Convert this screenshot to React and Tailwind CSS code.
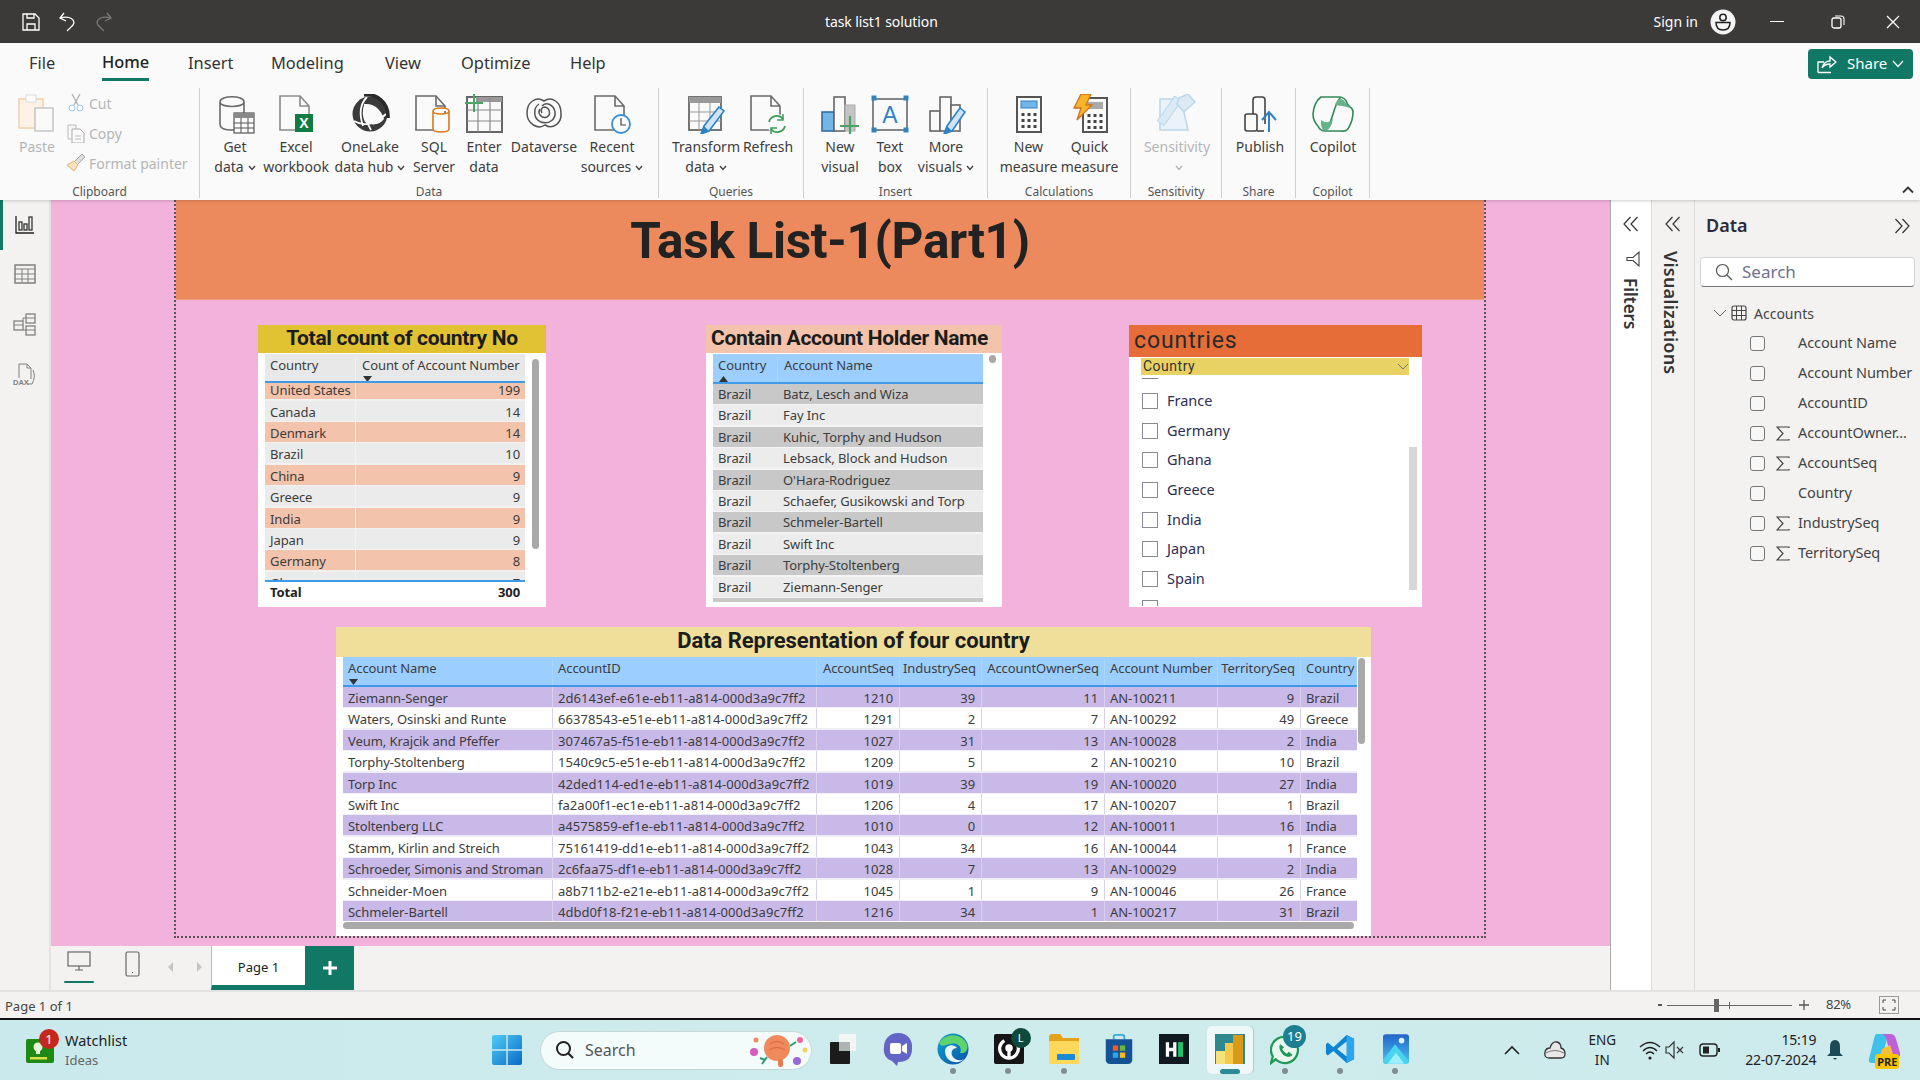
import React from "react";

const seg = "font-['Noto_Sans',sans-serif]";
const din = "font-['Roboto',sans-serif]";

function Svg({ w = 40, h = 40, vb, className = "", children }) {
  return (
    <svg width={w} height={h} viewBox={vb || `0 0 ${w} ${h}`} fill="none" className={`shrink-0 ${className}`}>
      {children}
    </svg>
  );
}

const G = "#6b6b6b";
const Page = ({ x = 5, c = G, sw = 1.6 }) => (
  <path d={`M${x} 2 H${x + 20} L${x + 29} 12 V36 H${x} Z M${x + 20} 2 V12 H${x + 29}`} stroke={c} strokeWidth={sw} />
);

const icons = {
  paste: (
    <Svg>
      <rect x="2" y="7" width="24" height="29" fill="#fdf2e4" stroke="#f0d4b0" strokeWidth="1.6" />
      <rect x="9" y="3" width="10" height="7" fill="#fff" stroke="#d9d9d9" />
      <rect x="18" y="16" width="18" height="23" fill="#fafafa" stroke="#c8c8c8" strokeWidth="1.6" />
    </Svg>
  ),
  getdata: (
    <Svg>
      <path d="M5 8 C5 1 29 1 29 8 V30 C29 36 14 37 9 35 C6 34 5 32 5 30 Z M5 8 C5 14 29 14 29 8" stroke={G} strokeWidth="1.6" fill="#fafafa" />
      <rect x="19" y="19" width="20" height="20" fill="#fafafa" stroke="#555" strokeWidth="1.2" />
      <rect x="19" y="19" width="20" height="5" fill="#888" />
      <path d="M19 29 H39 M19 34 H39 M26 24 V39 M33 24 V39" stroke="#555" />
    </Svg>
  ),
  excel: (
    <Svg>
      <Page x={4} c="#8a8a8a" />
      <rect x="19" y="20" width="18" height="18" fill="#107c41" />
      <text x="28" y="34" textAnchor="middle" fontSize="14" fontWeight="700" fill="#fff" fontFamily="Liberation Sans">X</text>
    </Svg>
  ),
  onelake: (
    <Svg>
      <circle cx="20" cy="20" r="17.5" fill="#3a3a3a" />
      <path d="M15 10 C23 9 31 15 34 25 C30 31 22 32 15 28 C12 22 12 15 15 10Z" fill="#fafafa" />
      <path d="M15 10 C13 18 15 26 21 36 M4 27 C14 33 26 30 36 20 M17 3 C10 10 9 20 13 32" stroke="#fff" strokeWidth="1.8" />
      <path d="M14 1 C26 -1 39 8 38 24" stroke="#2a2a2a" strokeWidth="3.5" />
    </Svg>
  ),
  sql: (
    <Svg>
      <Page x={2} />
      <path d="M19 17 C19 13 35 13 35 17 V35 C35 39 19 39 19 35 Z M19 17 C19 21 35 21 35 17" fill="#fafafa" stroke="#d97b1f" strokeWidth="1.6" />
    </Svg>
  ),
  enter: (
    <Svg>
      <rect x="3" y="3" width="35" height="35" fill="#fafafa" stroke="#666" strokeWidth="2" />
      <rect x="12" y="3" width="26" height="5" fill="#999" />
      <path d="M3 16 H38 M3 27 H38 M14 4 V38 M26 4 V38" stroke="#8a8a8a" strokeWidth="1.2" />
      <path d="M10 0 V18 M1 9 H19" stroke="#4aa564" strokeWidth="2" />
    </Svg>
  ),
  dataverse: (
    <Svg>
      <path d="M20 7 C12 2 3 8 3 19 C3 30 14 36 21 31 C29 36 38 29 37 19 C37 8 28 2 20 7Z" stroke="#555" strokeWidth="1.5" />
      <path d="M15 10 C9 14 9 25 17 28 C25 31 32 25 31 18 C30 11 22 7 18 12" stroke="#555" strokeWidth="1.5" />
      <path d="M16 15 C13 20 18 25 23 23 C27 21 26 14 21 13 C18 13 16 16 18 19" stroke="#555" strokeWidth="1.5" />
    </Svg>
  ),
  recent: (
    <Svg>
      <Page x={3} />
      <circle cx="29" cy="30" r="9" fill="#fafafa" stroke="#3a8fd0" strokeWidth="1.8" />
      <path d="M29 24 V31 H34" stroke="#444" strokeWidth="1.2" />
    </Svg>
  ),
  transform: (
    <Svg>
      <rect x="3" y="3" width="32" height="33" fill="#fafafa" stroke="#666" strokeWidth="1.8" />
      <rect x="3" y="3" width="32" height="6" fill="#999" />
      <path d="M3 18 H35 M3 27 H35 M13 9 V36 M24 9 V36" stroke="#999" />
      <path d="M33 13 L38 17 L23 37 L15 40 L18 32Z" fill="#cfe5f7" stroke="#2f83c5" strokeWidth="1.6" />
      <path d="M18 32 L23 37 L15 40Z" fill="#2f83c5" />
    </Svg>
  ),
  refresh: (
    <Svg>
      <Page x={3} />
      <circle cx="29" cy="30" r="10" fill="#fafafa" />
      <path d="M21 28 A8 8 0 0 1 35 25 M37 32 A8 8 0 0 1 23 35" stroke="#3f9b5a" strokeWidth="1.8" />
      <path d="M35 20 V26 H29 M23 40 V34 H29" stroke="#3f9b5a" strokeWidth="1.5" />
    </Svg>
  ),
  newvisual: (
    <Svg>
      <rect x="2" y="18" width="12" height="19" fill="#74b5e8" stroke="#2f6ea5" strokeWidth="1.6" />
      <rect x="14" y="3" width="11" height="34" fill="#fafafa" stroke="#666" strokeWidth="1.6" />
      <rect x="25" y="11" width="10" height="26" fill="#c4c4c4" stroke="#aaa" />
      <path d="M30 22 V40 M20 32 H39" stroke="#4aa564" strokeWidth="2.2" />
    </Svg>
  ),
  textbox: (
    <Svg>
      <rect x="3" y="5" width="34" height="31" fill="#fafafa" stroke="#555" strokeWidth="1.4" />
      <path d="M3 3 h2 v2 h-2z M35 3 h2 v2 h-2z M3 35 h2 v2 h-2z M35 35 h2 v2 h-2z" stroke="#2f83c5" strokeWidth="3" />
      <text x="20" y="29" textAnchor="middle" fontSize="23" fill="#2f83c5" fontFamily="Liberation Sans">A</text>
    </Svg>
  ),
  more: (
    <Svg>
      <rect x="4" y="17" width="10" height="20" fill="#fafafa" stroke="#666" strokeWidth="1.6" />
      <rect x="14" y="3" width="11" height="34" fill="#fafafa" stroke="#666" strokeWidth="1.6" />
      <rect x="25" y="11" width="9" height="26" fill="#fafafa" stroke="#666" strokeWidth="1.6" />
      <path d="M34 14 L39 18 L26 37 L18 40 L21 32Z" fill="#cfe5f7" stroke="#2f83c5" strokeWidth="1.6" />
      <path d="M21 32 L26 37 L18 40Z" fill="#2f83c5" />
    </Svg>
  ),
  measure: (
    <Svg>
      <rect x="8" y="3" width="24" height="35" fill="#fafafa" stroke="#555" strokeWidth="2" />
      <rect x="12" y="7" width="16" height="7" fill="#74b5e8" stroke="#2f83c5" />
      <path d="M12.5 19h3v3h-3zM18.5 19h3v3h-3zM24.5 19h3v3h-3zM12.5 25h3v3h-3zM18.5 25h3v3h-3zM24.5 25h3v3h-3zM12.5 31h3v3h-3zM18.5 31h3v3h-3zM24.5 31h3v3h-3z" fill="#444" />
    </Svg>
  ),
  quick: (
    <Svg>
      <rect x="13" y="4" width="24" height="34" fill="#fafafa" stroke="#555" strokeWidth="2" />
      <rect x="17" y="8" width="16" height="7" fill="#aaa" />
      <path d="M17.5 20h3v3h-3zM23.5 20h3v3h-3zM29.5 20h3v3h-3zM17.5 26h3v3h-3zM23.5 26h3v3h-3zM29.5 26h3v3h-3zM17.5 32h3v3h-3zM23.5 32h3v3h-3zM29.5 32h3v3h-3z" fill="#444" />
      <path d="M11 0 H21 L16 11 H22 L7 26 L11 14 H4Z" fill="#f7b52a" stroke="#d6701a" strokeWidth="1.3" />
    </Svg>
  ),
  sens: (
    <Svg>
      <path d="M3 5 H24 L31 36 H3Z" fill="#eaf3fa" stroke="#bcd8ec" strokeWidth="1.6" />
      <rect x="8" y="3" width="8" height="30" transform="rotate(35 14 18)" fill="#dceaf5" stroke="#bcd8ec" />
      <path d="M22 4 L31 0 L38 8 L30 15 L27 18 L20 10Z" fill="#dceaf5" stroke="#bcd8ec" strokeWidth="1.5" />
    </Svg>
  ),
  publish: (
    <Svg>
      <rect x="5" y="20" width="12" height="17" rx="2" fill="#fafafa" stroke="#444" strokeWidth="1.6" />
      <path d="M13 20 V6 Q13 3 16 3 H22 Q25 3 25 6 V30" stroke="#444" strokeWidth="1.6" />
      <path d="M17 37 H24" stroke="#444" strokeWidth="1.6" />
      <path d="M29 38 V18 M22 26 L29 18 L36 26" stroke="#2f83c5" strokeWidth="2" />
    </Svg>
  ),
  copilot: (
    <Svg w={44} h={40}>
      <path d="M10 3 H28 Q34 3 36 9 C37 14 42 12 42 18 Q42 26 38 33 Q36 38 30 37 H15 Q9 37 7 32 Q2 27 2 20 Q3 8 10 3Z" fill="#fafafa" stroke="#2f8a57" strokeWidth="1.6" />
      <path d="M14 37 C22 30 22 10 30 3" stroke="#2f8a57" strokeWidth="1.6" />
      <path d="M24 11 C25 6 31 2 34 8 Q36 12 40 14 Q33 12 24 11Z" fill="#67b388" />
      <path d="M10 26 C16 30 20 28 22 24 Q21 34 15 37 Q9 36 10 26Z" fill="#67b388" />
    </Svg>
  ),
};

function Chev({ c = "#444" }) {
  return (
    <svg width="8" height="6" viewBox="0 0 8 6" className="inline-block ml-[4px]">
      <path d="M1 1 L4 4.5 L7 1" stroke={c} strokeWidth="1.4" fill="none" />
    </svg>
  );
}

function RB({ icon, l1, l2, chev, w, off, ml = "" }) {
  return (
    <div className={`${w} ${ml} flex flex-col items-center shrink-0`}>
      <div className="h-[42px] flex items-center justify-center">{icon}</div>
      <div className={`mt-[2px] h-[20px] leading-[20px] whitespace-nowrap text-[14px] ${off ? "text-[#b5b5b5]" : "text-[#3d3d3d]"}`}>{l1}</div>
      <div className={`h-[20px] leading-[20px] whitespace-nowrap text-[14px] ${off ? "text-[#b5b5b5]" : "text-[#3d3d3d]"}`}>
        {l2}
        {chev && <Chev c={off ? "#b5b5b5" : "#444"} />}
      </div>
    </div>
  );
}

function Group({ w, label, pad = "", children }) {
  return (
    <div className={`${w} h-[110px] shrink-0 border-r border-[#cfcfcf] flex flex-col`}>
      <div className={`flex h-[94px] shrink-0 pt-[5px] ${pad}`}>{children}</div>
      <div className="h-[20px] leading-[20px] text-[12px] text-center text-[#555]">{label}</div>
    </div>
  );
}

function TitleBar() {
  return (
    <div className="h-[43px] bg-[#3b3a39] flex items-center text-white shrink-0">
      <Svg w={20} h={20} className="ml-[21px]">
        <path d="M2 2 H14 L18 6 V18 H2Z M6 18 V12 H14 V18 M6 2 V6 H13 V2" stroke="#fff" strokeWidth="1.3" />
      </Svg>
      <Svg w={18} h={20} className="ml-[17px]">
        <path d="M6 1 L2 6 L8 9 M2 6 C12 3 18 8 15 13 L9 19" stroke="#fff" strokeWidth="1.3" />
      </Svg>
      <Svg w={18} h={20} className="ml-[19px]">
        <path d="M12 1 L16 6 L10 9 M16 6 C6 3 0 8 3 13 L9 19" stroke="#7a7978" strokeWidth="1.3" />
      </Svg>
      <div className={`${seg} ml-[712px] text-[14px] tracking-[-0.1px] whitespace-nowrap`}>task list1 solution</div>
      <div className={`${seg} ml-auto text-[14px] whitespace-nowrap`}>Sign in</div>
      <Svg w={26} h={26} className="ml-[12px]">
        <circle cx="13" cy="13" r="12.5" fill="#f5f5f5" />
        <circle cx="13" cy="8.5" r="3.2" stroke="#222" strokeWidth="1.5" />
        <path d="M6 13.5 H20 Q20 21 13 21 Q6 21 6 13.5Z" stroke="#222" strokeWidth="1.5" />
      </Svg>
      <div className="ml-[34px] w-[14px] h-[1.5px] bg-white" />
      <Svg w={14} h={14} className="ml-[47px]">
        <rect x="1" y="3" width="9" height="10" rx="2" stroke="#fff" strokeWidth="1.3" />
        <path d="M4 1 H10 Q13 1 13 4 V10" stroke="#fff" strokeWidth="1.1" />
      </Svg>
      <Svg w={14} h={14} className="ml-[41px] mr-[20px]">
        <path d="M1 1 L13 13 M13 1 L1 13" stroke="#fff" strokeWidth="1.3" />
      </Svg>
    </div>
  );
}

function Ribbon() {
  return (
    <div className={`${seg} h-[157px] bg-[#fafafa] shrink-0 relative z-10 shadow-[0_1px_3px_rgba(0,0,0,0.18)]`}>
      <div className="h-[42px] flex items-center text-[16.4px] text-[#333] pl-[29px]">
        <div className="w-[73px] -mt-[2px]">File</div>
        <div className="w-[86px] h-[42px]">
          <div className="inline-block h-[38px] leading-[38px] font-medium text-[#222] border-b-[3px] border-[#117865]">Home</div>
        </div>
        <div className="w-[83px] -mt-[2px]">Insert</div>
        <div className="w-[114px] -mt-[2px]">Modeling</div>
        <div className="w-[76px] -mt-[2px]">View</div>
        <div className="w-[109px] -mt-[2px]">Optimize</div>
        <div className="-mt-[2px]">Help</div>
        <div className="ml-auto mr-[7px] -mt-[1px] w-[105px] h-[30px] rounded-[4px] bg-[#117865] text-white text-[15px] flex items-center pl-[9px]">
          <Svg w={20} h={20}>
            <path d="M1 18.5 H14 M1 18.5 V8 H7" stroke="#fff" strokeWidth="1.3" />
            <path d="M5 14 C6 9 10 7 13 7 V3 L19 8 L13 13 V10 C10 10 7 11 5 14Z" stroke="#fff" strokeWidth="1.3" />
          </Svg>
          <span className="ml-[10px]">Share</span>
          <svg width="12" height="8" viewBox="0 0 12 8" className="ml-[5px]"><path d="M1 1 L6 6.5 L11 1" stroke="#fff" strokeWidth="1.2" fill="none" /></svg>
        </div>
      </div>
      <div className="flex mt-[3px] relative">
        <Group w="w-[200px]" label="Clipboard">
          <div className="flex pl-[12px]">
            <div className="w-[50px] flex flex-col items-center">
              <div className="h-[42px] flex items-center -mt-[2px]">{icons.paste}</div>
              <div className="mt-[4px] h-[20px] leading-[20px] text-[14px] text-[#b5b5b5]">Paste</div>
            </div>
            <div className="ml-[4px] -mt-[5px] text-[14px] text-[#b5b5b5] flex flex-col">
              <div className="h-[30px] flex items-center">
                <Svg w={20} h={20}><path d="M6 1 L12 12 M14 1 L8 12" stroke="#aaa" strokeWidth="1.2" /><circle cx="6" cy="15" r="3" stroke="#9fc7e6" /><circle cx="14" cy="15" r="3" stroke="#9fc7e6" /></Svg>
                <span className="ml-[3px]">Cut</span>
              </div>
              <div className="h-[30px] flex items-center">
                <Svg w={20} h={20}><path d="M2 2 H10 V16 H2Z" stroke="#bbb" /><path d="M6 6 H14 L18 10 V20 H6Z" fill="#fafafa" stroke="#aaa" /><path d="M9 13 H15 M9 16 H15" stroke="#bbb" /></Svg>
                <span className="ml-[3px]">Copy</span>
              </div>
              <div className="h-[30px] flex items-center whitespace-nowrap">
                <Svg w={20} h={20}><path d="M1 12 L8 18 L12 12 L8 8Z" fill="#f7e3c2" stroke="#e5b06c" /><path d="M9 8 L16 1 L19 4 L12 11" fill="#ddd" stroke="#aaa" /></Svg>
                <span className="ml-[3px]">Format painter</span>
              </div>
            </div>
          </div>
        </Group>
        <Group w="w-[459px]" label="Data" pad="pl-[5px]">
          <RB w="w-[60px]" icon={icons.getdata} l1="Get" l2="data" chev />
          <RB w="w-[60px]" ml="ml-[1px]" icon={icons.excel} l1="Excel" l2="workbook" />
          <RB w="w-[80px]" ml="ml-[4px]" icon={icons.onelake} l1="OneLake" l2="data hub" chev />
          <RB w="w-[48px]" icon={icons.sql} l1="SQL" l2="Server" />
          <RB w="w-[48px]" ml="ml-[2px]" icon={icons.enter} l1="Enter" l2="data" />
          <RB w="w-[72px]" icon={icons.dataverse} l1="Dataverse" />
          <RB w="w-[64px]" icon={icons.recent} l1="Recent" l2="sources" chev />
        </Group>
        <Group w="w-[145px]" label="Queries" pad="pl-[11px]">
          <RB w="w-[72px]" icon={icons.transform} l1="Transform" l2="data" chev />
          <RB w="w-[50px]" ml="ml-[1px]" icon={icons.refresh} l1="Refresh" />
        </Group>
        <Group w="w-[184px]" label="Insert" pad="pl-[11px]">
          <RB w="w-[50px]" icon={icons.newvisual} l1="New" l2="visual" />
          <RB w="w-[50px]" icon={icons.textbox} l1="Text" l2="box" />
          <RB w="w-[60px]" ml="ml-[1px]" icon={icons.more} l1="More" l2="visuals" chev />
        </Group>
        <Group w="w-[143px]" label="Calculations" pad="pl-[10px]">
          <RB w="w-[61px]" icon={icons.measure} l1="New" l2="measure" />
          <RB w="w-[61px]" icon={icons.quick} l1="Quick" l2="measure" />
        </Group>
        <Group w="w-[91px]" label="Sensitivity" pad="pl-[6px]">
          <RB w="w-[80px]" off icon={icons.sens} l1="Sensitivity" l2="" chev />
        </Group>
        <Group w="w-[74px]" label="Share" pad="pl-[8px]">
          <RB w="w-[60px]" icon={icons.publish} l1="Publish" />
        </Group>
        <Group w="w-[74px]" label="Copilot" pad="pl-[7px]">
          <RB w="w-[60px]" icon={icons.copilot} l1="Copilot" />
        </Group>
        <svg width="12" height="8" viewBox="0 0 12 8" className="ml-[532px] mt-[98px]"><path d="M1 6.5 L6 1.5 L11 6.5" stroke="#333" strokeWidth="1.8" fill="none" /></svg>
      </div>
    </div>
  );
}

const Tri = ({ up }) => (
  <svg width="9" height="6" viewBox="0 0 9 6" className="block ml-[1px] mt-[2px]">
    <path d={up ? "M0 6 L4.5 0 L9 6Z" : "M0 0 L9 0 L4.5 6Z"} fill="#333" />
  </svg>
);

const t1 = [["United States", 199], ["Canada", 14], ["Denmark", 14], ["Brazil", 10], ["China", 9], ["Greece", 9], ["India", 9], ["Japan", 9], ["Germany", 8], ["Ghana", 7]];
const t2 = ["Batz, Lesch and Wiza", "Fay Inc", "Kuhic, Torphy and Hudson", "Lebsack, Block and Hudson", "O'Hara-Rodriguez", "Schaefer, Gusikowski and Torp", "Schmeler-Bartell", "Swift Inc", "Torphy-Stoltenberg", "Ziemann-Senger", ""];
const t3 = [
  ["Ziemann-Senger", "2d6143ef-e61e-eb11-a814-000d3a9c7ff2", 1210, 39, 11, "AN-100211", 9, "Brazil"],
  ["Waters, Osinski and Runte", "66378543-e51e-eb11-a814-000d3a9c7ff2", 1291, 2, 7, "AN-100292", 49, "Greece"],
  ["Veum, Krajcik and Pfeffer", "307467a5-f51e-eb11-a814-000d3a9c7ff2", 1027, 31, 13, "AN-100028", 2, "India"],
  ["Torphy-Stoltenberg", "1540c9c5-e51e-eb11-a814-000d3a9c7ff2", 1209, 5, 2, "AN-100210", 10, "Brazil"],
  ["Torp Inc", "42ded114-ed1e-eb11-a814-000d3a9c7ff2", 1019, 39, 19, "AN-100020", 27, "India"],
  ["Swift Inc", "fa2a00f1-ec1e-eb11-a814-000d3a9c7ff2", 1206, 4, 17, "AN-100207", 1, "Brazil"],
  ["Stoltenberg LLC", "a4575859-ef1e-eb11-a814-000d3a9c7ff2", 1010, 0, 12, "AN-100011", 16, "India"],
  ["Stamm, Kirlin and Streich", "75161419-dd1e-eb11-a814-000d3a9c7ff2", 1043, 34, 16, "AN-100044", 1, "France"],
  ["Schroeder, Simonis and Stroman", "2c6faa75-df1e-eb11-a814-000d3a9c7ff2", 1028, 7, 13, "AN-100029", 2, "India"],
  ["Schneider-Moen", "a8b711b2-e21e-eb11-a814-000d3a9c7ff2", 1045, 1, 9, "AN-100046", 26, "France"],
  ["Schmeler-Bartell", "4dbd0f18-f21e-eb11-a814-000d3a9c7ff2", 1216, 34, 1, "AN-100217", 31, "Brazil"],
];

const cell = "text-[13px] tracking-[-0.08px] text-[#3c3c3c] whitespace-nowrap overflow-hidden";

function Table1() {
  return (
    <div className="w-[288px] h-[282px] bg-white shrink-0 flex flex-col">
      <div className={`${din} h-[28px] bg-[#e1c233] font-bold text-[21px] tracking-[-0.3px] leading-[26px] text-center text-[#1c1c1c] whitespace-nowrap`}>Total count of country No</div>
      <div className="relative pl-[7px] w-[267px] mt-[1px]">
        <div className={`${seg} w-[260px]`}>
          <div className={`grid grid-cols-[90px_170px] h-[29px] bg-[#e8e8e8] border-b-2 border-[#3f9bea] pt-[3px] ${cell}`}>
            <div className="pl-[5px] leading-[17px]">Country</div>
            <div className="pl-[6px] leading-[17px] border-l border-[#f2f2f2]">Count of Account Number<Tri /></div>
          </div>
          <div className="h-[197px] overflow-hidden bg-[#f1f1f1]">
            <div className="-mt-[3.7px]">
              {t1.map(([n, v], i) => (
                <div key={n} className={`grid grid-cols-[90px_170px] h-[20px] mb-[1.4px] leading-[22px] ${cell} ${i % 2 ? "bg-[#ebebeb]" : "bg-[#f4c3ab]"}`}>
                  <div className="pl-[5px]">{n}</div>
                  <div className="pr-[5px] text-right border-l border-[#f2f2f2]">{v}</div>
                </div>
              ))}
            </div>
          </div>
          <div className={`grid grid-cols-[90px_170px] h-[22px] border-t-2 border-[#3f9bea] leading-[20px] ${cell} font-bold text-[#222]`}>
            <div className="pl-[5px]">Total</div>
            <div className="pr-[5px] text-right">300</div>
          </div>
        </div>
        <div className="absolute left-[274px] top-[5px] w-[7px] h-[190px] rounded-full bg-[#a9a9a9]" />
      </div>
    </div>
  );
}

function Table2() {
  return (
    <div className="w-[296px] h-[282px] bg-white shrink-0 flex flex-col ml-[160px]">
      <div className={`${din} h-[28px] bg-[#f4c3ab] font-bold text-[21px] tracking-[-0.33px] leading-[26px] pl-[5px] text-[#1c1c1c] whitespace-nowrap`}>Contain Account Holder Name</div>
      <div className={`${seg} relative mt-[1px] ml-[7px] w-[270px]`}>
        <div className={`grid grid-cols-[64px_206px] h-[30px] bg-[#9ccfff] border-b-2 border-[#3f9bea] pt-[3px] ${cell}`}>
          <div className="pl-[5px] leading-[17px]">Country<Tri up /></div>
          <div className="pl-[6px] leading-[17px] border-l border-[#a9d6ff]">Account Name</div>
        </div>
        <div className="h-[218px] overflow-hidden bg-[#f4f4f4]">
          {t2.map((n, i) => (
            <div key={i} className={`grid grid-cols-[64px_206px] h-[20px] mb-[1.4px] leading-[21px] ${cell} ${i % 2 ? "bg-[#ececec]" : "bg-[#c8c8c8]"}`}>
              <div className="pl-[5px]">{n ? "Brazil" : ""}</div>
              <div className="pl-[6px]">{n}</div>
            </div>
          ))}
        </div>
        <div className="absolute left-[276px] top-[1px] w-[7px] h-[8px] rounded-full bg-[#a9a9a9]" />
      </div>
    </div>
  );
}

function Slicer() {
  const items = ["France", "Germany", "Ghana", "Greece", "India", "Japan", "Spain"];
  return (
    <div className="w-[293px] h-[282px] bg-white shrink-0 flex flex-col ml-[127px]">
      <div className={`${din} h-[32px] bg-[#e66d37] text-[23px] tracking-[0.9px] leading-[32px] pl-[5px] text-[#2a2a2a]`}>countries</div>
      <div className="relative flex-1 overflow-hidden">
        <div className={`${din} ml-[12px] mt-[1px] w-[268px] h-[17px] bg-[#e8d264] text-[14px] tracking-[0.5px] leading-[17px] pl-[2px] text-[#333] flex items-center justify-between`}>
          Country
          <svg width="12" height="7" viewBox="0 0 12 7"><path d="M1 1 L6 6 L11 1" stroke="#777" fill="none" /></svg>
        </div>
        <div className="ml-[13px] mt-[3px] w-[16px] h-[1px] bg-[#888]" />
        <div className={`${din} mt-[7px]`}>
          {items.map((n) => (
            <div key={n} className="h-[29.7px] flex items-center pl-[13px]">
              <div className="w-[16px] h-[16px] border-[1.5px] border-[#8a8a96] bg-white" />
              <div className={`${seg} ml-[9px] text-[14.5px] text-[#2e2e55]`}>{n}</div>
            </div>
          ))}
          <div className="ml-[13px] mt-[6px] w-[16px] h-[6px] border-x-[1.5px] border-t-[1.5px] border-[#8a8a96]" />
        </div>
        <div className="absolute left-[280px] top-[90px] w-[8px] h-[143px] bg-[#d6d6d6]" />
      </div>
    </div>
  );
}

const t3cols = "grid grid-cols-[209px_264px_83px_82px_123px_113px_83px_57px]";

function Table3() {
  const heads = ["Account Name", "AccountID", "AccountSeq", "IndustrySeq", "AccountOwnerSeq", "Account Number", "TerritorySeq", "Country"];
  return (
    <div className="w-[1035px] h-[309px] bg-white ml-[160px] mt-[20px] flex flex-col">
      <div className={`${din} h-[30px] bg-[#f0df9a] font-bold text-[22px] tracking-[-0.05px] leading-[28px] text-center text-[#1c1c1c] whitespace-nowrap`}>Data Representation of four country</div>
      <div className={`${seg} relative ml-[7px] w-[1014px]`}>
        <div className={`${t3cols} h-[30px] bg-[#9ccfff] border-b-2 border-[#3f9bea] pt-[2px] ${cell}`}>
          {heads.map((h, i) => (
            <div key={h} className={`leading-[18px] ${i ? "border-l border-[#a9d6ff]" : ""} ${i === 2 || i === 3 || i === 4 || i === 6 ? "text-right pr-[5px]" : "pl-[5px]"}`}>
              {h}
              {i === 0 && <Tri />}
            </div>
          ))}
        </div>
        <div className="bg-[#efedf7]">
          {t3.map((r, k) => (
            <div key={k} className={`${t3cols} h-[20px] mb-[1.4px] leading-[23px] ${cell} ${k % 2 ? "bg-white" : "bg-[#c8b9e8]"}`}>
              {r.map((c, i) => (
                <div key={i} className={`${i ? "border-l border-[#d9d0ee]" : ""} ${i === 1 ? "tracking-[0.05px]" : ""} ${typeof c === "number" ? "text-right pr-[6px]" : "pl-[5px]"}`}>{c}</div>
              ))}
            </div>
          ))}
        </div>
        <div className="w-[1011px] h-[7px] rounded-full bg-[#a9a9a9]" />
        <div className="absolute left-[1015px] top-[1px] w-[7px] h-[86px] rounded-full bg-[#a9a9a9]" />
      </div>
    </div>
  );
}

function Canvas() {
  return (
    <div className="h-[746px] bg-[#f3b2dc] pl-[123px] shrink-0">
      <div className="w-[1312px] h-[738px] border-x-2 border-b-2 border-dotted border-[#555]">
        <div className={`${din} h-[100px] bg-[#ec8a5e] border-b border-[#f3a07c] font-bold text-[49.5px] leading-[83px] text-center text-[#222] tracking-[-0.3px]`}>Task List-1(Part1)</div>
        <div className="flex mt-[25px] pl-[82px]">
          <Table1 />
          <Table2 />
          <Slicer />
        </div>
        <Table3 />
      </div>
    </div>
  );
}

function Rail() {
  return (
    <div className="w-[51px] shrink-0 bg-[#f3f2f1] border-r-2 border-[#e3e3e3] relative flex flex-col items-center">
      <div className="absolute left-0 top-0 w-[3px] h-[50px] bg-[#117865]" />
      <Svg w={20} h={20} className="mt-[15px]">
        <path d="M1 1 V18 H19" stroke="#222" strokeWidth="1.3" />
        <rect x="4" y="7" width="3" height="8" stroke="#333" strokeWidth="1.3" />
        <rect x="9" y="9" width="3" height="6" stroke="#333" strokeWidth="1.3" />
        <rect x="14" y="2" width="3" height="13" stroke="#333" strokeWidth="1.3" />
      </Svg>
      <Svg w={22} h={22} className="mt-[28px]">
        <rect x="1" y="2" width="20" height="18" stroke="#808080" strokeWidth="1.5" />
        <path d="M1 6 H21 M1 11 H21 M1 16 H21 M8 6 V20 M14 6 V20" stroke="#808080" />
      </Svg>
      <Svg w={24} h={24} className="mt-[28px]">
        <rect x="1" y="8" width="9" height="9" stroke="#808080" strokeWidth="1.3" />
        <rect x="13" y="1" width="9" height="9" stroke="#808080" strokeWidth="1.3" />
        <rect x="13" y="13" width="9" height="9" stroke="#808080" strokeWidth="1.3" />
        <path d="M1 12 H10 M13 5 H22 M13 17 H22 M10 5 H13 M10 5 V8 M10 17 H13" stroke="#808080" />
      </Svg>
      <Svg w={24} h={24} className="mt-[26px]">
        <path d="M6 15 V1 H14 L18 5 V16 M14 1 V5 H18" stroke="#808080" />
        <path d="M20 7 Q23 14 19 21 H14" stroke="#808080" />
        <text x="0" y="22" fontSize="7.5" fontWeight="700" fill="#808080" fontFamily="Liberation Sans">DAX</text>
      </Svg>
    </div>
  );
}

function Tabs() {
  return (
    <div className="h-[44px] bg-[#f3f2f1] flex shrink-0">
      <div className="w-[13px]" />
      <div className="w-[30px] flex flex-col items-center relative">
        <Svg w={24} h={22} className="mt-[4px]">
          <rect x="1" y="2" width="22" height="14" stroke="#666" strokeWidth="1.2" />
          <path d="M12 16 V20 M8 20 H16" stroke="#666" strokeWidth="1.2" />
        </Svg>
        <div className="absolute bottom-[7px] w-[30px] h-[2.5px] rounded bg-[#117865]" />
      </div>
      <Svg w={16} h={26} className="ml-[31px] mt-[5px]">
        <rect x="1" y="1" width="13" height="24" rx="1.5" stroke="#666" strokeWidth="1.2" />
        <path d="M7 21.5 h1" stroke="#555" strokeWidth="1.2" />
      </Svg>
      <Svg w={8} h={12} className="ml-[26px] mt-[15px]"><path d="M6 1 L1 6 L6 11Z" fill="#c4c4c4" /></Svg>
      <Svg w={8} h={12} className="ml-[20px] mt-[15px]"><path d="M2 1 L7 6 L2 11Z" fill="#c4c4c4" /></Svg>
      <div className={`${seg} ml-[8px] w-[94px] bg-white border-l border-[#bbb] border-b-[5px] border-b-[#117865] text-[13px] text-[#222] flex items-center justify-center pt-[4px]`}>Page 1</div>
      <div className="w-[49px] bg-[#117865] flex items-center justify-center text-white">
        <Svg w={14} h={14}><path d="M7 0 V14 M0 7 H14" stroke="#fff" strokeWidth="3" /></Svg>
      </div>
    </div>
  );
}

function RightPanes() {
  const fields = [
    ["Account Name", 0],
    ["Account Number", 0],
    ["AccountID", 0],
    ["AccountOwner...", 1],
    ["AccountSeq", 1],
    ["Country", 0],
    ["IndustrySeq", 1],
    ["TerritorySeq", 1],
  ];
  const Dbl = ({ flip }) => (
    <svg width="16" height="16" viewBox="0 0 16 16" className={flip ? "scale-x-[-1]" : ""}>
      <path d="M7.5 1 L1 8 L7.5 15 M14.5 1 L8 8 L14.5 15" stroke="#333" strokeWidth="1.2" fill="none" />
    </svg>
  );
  return (
    <>
      <div className={`${seg} w-[42px] shrink-0 bg-white border-l border-[#aaa] border-r border-r-[#dcdcdc] flex flex-col items-center pt-[16px]`}>
        <Dbl />
        <svg width="16" height="16" viewBox="0 0 16 16" className="mt-[19px] ml-[3px]">
          <path d="M14 1 V15 L8 9.5 H2 V6.5 H8Z" stroke="#444" strokeWidth="1.1" fill="none" />
        </svg>
        <div className="mt-[11px] ml-[-3px] [writing-mode:vertical-rl] text-[17px] font-semibold text-[#333] leading-[20px]">Filters</div>
      </div>
      <div className={`${seg} w-[43px] shrink-0 bg-[#f3f2f1] border-r border-[#dcdcdc] flex flex-col items-center pt-[16px]`}>
        <Dbl />
        <div className="mt-[19px] ml-[-5px] [writing-mode:vertical-rl] text-[18px] font-semibold tracking-[0.2px] text-[#333] leading-[20px]">Visualizations</div>
      </div>
      <div className={`${seg} flex-1 bg-[#f3f2f1]`}>
        <div className="flex items-center justify-between pl-[11px] pr-[10px] pt-[7px] h-[44px]">
          <div className="text-[18px] font-semibold text-[#2b2b3b]">Data</div>
          <Dbl flip />
        </div>
        <div className="mx-[5px] mt-[13px] h-[30px] w-[215px] rounded-[4px] bg-white border border-[#d5d5d5] border-b-[#777] flex items-center pl-[14px]">
          <Svg w={18} h={18}>
            <circle cx="7.5" cy="7.5" r="6" stroke="#555" strokeWidth="1.2" />
            <path d="M12 12 L17 17" stroke="#555" strokeWidth="1.2" />
          </Svg>
          <span className="ml-[9px] text-[17px] text-[#707090]">Search</span>
        </div>
        <div className="flex items-center h-[24px] mt-[14px] pl-[18px] text-[14px] text-[#444]">
          <svg width="14" height="8" viewBox="0 0 14 8"><path d="M1 1 L7 7 L13 1" stroke="#666" fill="none" /></svg>
          <Svg w={16} h={16} className="ml-[4px]">
            <rect x="1" y="1" width="14" height="14" rx="2" stroke="#444" strokeWidth="1.2" />
            <path d="M1 5.5 H15 M1 10.5 H15 M5.5 1 V15 M10.5 1 V15" stroke="#444" />
          </Svg>
          <span className="ml-[7px]">Accounts</span>
        </div>
        <div className="mt-[3px]">
          {fields.map(([f, s]) => (
            <div key={f} className="h-[30px] flex items-center pl-[55px] text-[14.5px] tracking-[-0.1px] text-[#444] whitespace-nowrap">
              <div className="w-[15px] h-[15px] rounded-[3px] border border-[#777] bg-[#f7f7f7]" />
              <div className="w-[14px] ml-[11px] text-center">
                {s ? (
                  <svg width="14" height="15" viewBox="0 0 14 15"><path d="M13 2 V1 H1 L7 7.5 L1 14 H13 V13" stroke="#444" strokeWidth="1.2" fill="none" /></svg>
                ) : null}
              </div>
              <span className="ml-[8px]">{f}</span>
            </div>
          ))}
        </div>
      </div>
    </>
  );
}

function StatusBar() {
  return (
    <div className={`${seg} h-[30px] bg-[#f3f2f1] border-t-2 border-[#e3e3e3] border-b-2 border-b-[#111] flex items-center shrink-0 text-[13px] text-[#444]`}>
      <span className="ml-[5px] mt-[3px]">Page 1 of 1</span>
      <div className="ml-auto w-[4px] h-[2px] bg-[#555]" />
      <div className="ml-[5px] w-[125px] h-[1px] bg-[#666] relative">
        <div className="absolute left-[47px] -top-[6px] w-[5px] h-[13px] bg-[#666]" />
        <div className="absolute left-[62px] -top-[3px] w-[1px] h-[7px] bg-[#666]" />
      </div>
      <Svg w={10} h={10} className="ml-[7px]"><path d="M5 0 V10 M0 5 H10" stroke="#555" strokeWidth="1.3" /></Svg>
      <span className="ml-[17px] w-[28px] text-[13px] tracking-[-0.3px]">82%</span>
      <Svg w={20} h={18} className="ml-[25px] mr-[21px]">
        <rect x="0.5" y="0.5" width="19" height="17" stroke="#9a9a9a" />
        <path d="M4 7 V4 H7 M13 4 H16 V7 M4 11 V14 H7 M13 14 H16 V11" stroke="#444" />
      </Svg>
    </div>
  );
}

function Tile({ children, dot, active }) {
  return (
    <div className={`w-[55.3px] h-[60px] relative flex items-center justify-center shrink-0`}>
      {active && <div className="absolute left-[5px] top-[6px] w-[46px] h-[48px] rounded-[5px] bg-[#eef8f9] shadow-[1px_0_1px_rgba(0,0,0,0.15)]" />}
      <div className="relative -mt-[2px]">{children}</div>
      {dot && <div className="absolute left-[24.5px] bottom-[6px] w-[6px] h-[6px] rounded-full bg-[#808e92]" />}
      {active && <div className="absolute left-[18px] bottom-[6px] w-[20px] h-[5px] rounded-full bg-[#2b8a98]" />}
    </div>
  );
}

function Taskbar() {
  return (
    <div className={`${seg} h-[60px] bg-[linear-gradient(90deg,#c9e9ec,#cfeced_50%,#cdeaec)] flex items-center shrink-0 relative`}>
      <div className="w-[492px] shrink-0 flex items-center">
        <div className="relative ml-[26px] w-[28px] h-[24px] mt-[1px] bg-[#1f8a13] rounded-[2px]">
          <svg width="28" height="24" viewBox="0 0 28 24">
            <circle cx="12" cy="8" r="4.5" fill="#e5f5d8" />
            <rect x="10" y="12" width="4" height="3" fill="#e5f5d8" />
            <rect x="4" y="18" width="17" height="2.5" fill="#d5e04a" />
          </svg>
          <div className="absolute -top-[10px] left-[13px] w-[20px] h-[20px] rounded-full bg-[#c5281c] text-white text-[13px] leading-[20px] text-center">1</div>
        </div>
        <div className="ml-[11px] leading-[20px]">
          <div className="text-[14.5px] text-[#222]">Watchlist</div>
          <div className="text-[13px] text-[#666]">Ideas</div>
        </div>
      </div>
      <Svg w={30} h={30}>
        <defs>
          <linearGradient id="wn" x1="0" y1="0" x2="1" y2="1"><stop offset="0" stopColor="#4dcdf5" /><stop offset="1" stopColor="#0a69c7" /></linearGradient>
        </defs>
        <path d="M0 2 Q0 0 2 0 H14.3 V14.3 H0Z M15.7 0 H28 Q30 0 30 2 V14.3 H15.7Z M0 15.7 H14.3 V30 H2 Q0 30 0 28Z M15.7 15.7 H30 V28 Q30 30 28 30 H15.7Z" fill="url(#wn)" />
      </Svg>
      <div className="ml-[18px] w-[272px] h-[39px] rounded-full bg-[#f4fbfb] border border-[#c4d8d8] flex items-center pl-[14px] shrink-0">
        <Svg w={20} h={20}>
          <circle cx="8.5" cy="8.5" r="6.5" stroke="#222" strokeWidth="2" />
          <path d="M13 13 L18 18" stroke="#222" strokeWidth="2.2" />
        </Svg>
        <span className="ml-[10px] text-[16px] text-[#555]">Search</span>
        <Svg w={60} h={36} className="ml-[112px]">
          <circle cx="6" cy="20" r="4" fill="#d65cc0" />
          <circle cx="8" cy="8" r="2.5" fill="#f08a5d" />
          <circle cx="52" cy="8" r="3" fill="#e76a9c" />
          <circle cx="49" cy="29" r="4" fill="#9a68d8" />
          <circle cx="57" cy="18" r="2.5" fill="#f2d35b" />
          <path d="M14 32 L19 25 M42 14 L48 10 M12 26 L17 28" stroke="#2f9a78" strokeWidth="2" />
          <ellipse cx="29" cy="16" rx="13" ry="13" fill="#f08a5d" />
          <path d="M22 12 Q29 7 36 12 M21 18 Q29 13 37 18" stroke="#d9653b" />
          <rect x="30" y="27" width="5" height="8" rx="2" fill="#e87a50" />
        </Svg>
      </div>
      <div className="flex ml-[3px]">
        <Tile>
          <Svg w={26} h={30}>
            <rect x="9" y="0" width="17" height="17" fill="#f4f6f6" />
            <rect x="0" y="8" width="20" height="22" rx="1" fill="#1b1b1b" />
            <rect x="9" y="8" width="11" height="9" fill="#aeb4b4" />
          </Svg>
        </Tile>
        <Tile>
          <Svg w={30} h={34}>
            <path d="M15 1 C25 1 30 8 29 17 C29 26 24 30 15 30 L14 34 L9 29 C3 27 0 22 1 15 C1 7 7 1 15 1Z" fill="#6264c6" />
            <rect x="7" y="11" width="11" height="11" rx="2" fill="#fff" />
            <path d="M19 14 L24 11 V22 L19 19Z" fill="#fff" />
          </Svg>
        </Tile>
        <Tile dot>
          <Svg w={32} h={32}>
            <defs>
              <linearGradient id="ed" x1="0" y1="0" x2="1" y2="1"><stop offset="0" stopColor="#0ea6cf" /><stop offset="1" stopColor="#0b4fa8" /></linearGradient>
            </defs>
            <circle cx="16" cy="16" r="15.5" fill="url(#ed)" />
            <path d="M2 10 C8 0 24 -1 30 11 C32 17 28 21 23 20 C26 13 19 9 13 11 C8 12 5 15 2 10Z" fill="#5dd36e" />
            <path d="M8 18 C8 12 17 10 20 15 C15 15 13 20 16 24 C19 28 24 28 27 26 C22 32 8 30 8 18Z" fill="#e6f8fb" />
          </Svg>
        </Tile>
        <Tile dot>
          <div className="w-[30px] h-[30px] rounded-[2px] bg-[#151515] relative">
            <svg width="30" height="30" viewBox="0 0 30 32">
              <path d="M10 7 A10 10 0 1 0 20 7 M15 26 V18" stroke="#fff" strokeWidth="3.5" fill="none" />
              <circle cx="15" cy="15" r="4" fill="#fff" />
            </svg>
            <div className="absolute -top-[6px] -right-[7px] w-[20px] h-[20px] rounded-full bg-[#0d4a3c] text-white text-[11px] leading-[20px] text-center">L</div>
          </div>
        </Tile>
        <Tile dot>
          <Svg w={30} h={30}>
            <path d="M0 3 Q0 0 3 0 H11 L14 4 H30 V10 H0Z" fill="#e4a11a" />
            <rect x="0" y="7" width="30" height="23" rx="1" fill="#ffd75a" />
            <rect x="8" y="20" width="18" height="6" rx="1" fill="#1b8ad6" />
          </Svg>
        </Tile>
        <Tile>
          <Svg w={30} h={30} vb="0 0 30 34">
            <path d="M9 6 V3 Q9 1 11 1 H19 Q21 1 21 3 V6" stroke="#35a9d6" strokeWidth="2" />
            <path d="M0 6 H30 V29 Q30 34 25 34 H5 Q0 34 0 29Z" fill="#145295" />
            <rect x="8" y="13" width="6" height="6" fill="#ee5a2a" />
            <rect x="16" y="13" width="6" height="6" fill="#6db83a" />
            <rect x="8" y="21" width="6" height="6" fill="#2ba6e8" />
            <rect x="16" y="21" width="6" height="6" fill="#f7bc1b" />
          </Svg>
        </Tile>
        <Tile>
          <div className="w-[30px] h-[30px] bg-[#101820] flex items-center justify-center">
            <svg width="18" height="15" viewBox="0 0 22 18"><path d="M1 0 H5 V7 H10 V0 H14 V18 H10 V11 H5 V18 H1Z" fill="#fff" /><rect x="16" y="0" width="6" height="18" fill="#1ec46a" /></svg>
          </div>
        </Tile>
        <Tile active>
          <Svg w={30} h={30}>
            <rect x="0" y="0" width="30" height="30" fill="#2f8790" />
            <rect x="1" y="17" width="11" height="13" fill="#f6e27a" />
            <rect x="10" y="9" width="11" height="21" fill="#f2c94c" />
            <rect x="18" y="1" width="10" height="29" fill="#d99a17" />
          </Svg>
        </Tile>
        <Tile dot>
          <div className="relative">
            <Svg w={30} h={32} vb="0 0 32 34">
              <path d="M16 4 A14 14 0 1 1 6 28 L1 32 L3 25 A14 14 0 0 1 16 4Z" fill="#e8f7ee" stroke="#21985a" strokeWidth="2.4" />
              <path d="M11 12 C9 14 10 19 14 23 C18 26 22 26 24 23 L20 20 L18 22 C16 21 14 19 13 17 L15 15Z" fill="#21985a" />
            </Svg>
            <div className="absolute -top-[8px] left-[13px] w-[23px] h-[23px] rounded-full bg-[#1f7f92] text-white text-[13px] leading-[23px] text-center">19</div>
          </div>
        </Tile>
        <Tile dot>
          <Svg w={30} h={30} vb="0 0 32 32">
            <path d="M23 1 L31 5 V27 L23 31 L9 18 L3 23 L1 21 V11 L3 9 L9 14Z" fill="#0f84d0" />
            <path d="M23 1 L31 5 V27 L23 31Z" fill="#2aa5ee" />
            <path d="M23 8 V24 L13 16Z" fill="#cdebec" />
          </Svg>
        </Tile>
        <Tile dot>
          <Svg w={26} h={30} vb="0 0 28 32">
            <defs>
              <linearGradient id="ph" x1="0" y1="0" x2="0" y2="1"><stop offset="0" stopColor="#2263c9" /><stop offset="1" stopColor="#4ac3ef" /></linearGradient>
            </defs>
            <rect x="0" y="0" width="28" height="32" rx="3" fill="url(#ph)" />
            <circle cx="20" cy="7" r="3" fill="#dff2ff" />
            <path d="M0 28 L13 11 L27 28 Q27 32 24 32 H3 Q0 32 0 28Z" fill="#48d4f0" />
            <path d="M5 32 L14 20 L23 32Z" fill="#9befff" />
          </Svg>
        </Tile>
      </div>
      <Svg w={16} h={10} className="ml-[81px]"><path d="M1 9 L8 2 L15 9" stroke="#222" strokeWidth="1.6" /></Svg>
      <Svg w={22} h={22} className="ml-[24px]">
        <path d="M5 19 Q0 19 1 13 Q2 9 6 9 Q8 2 13 3 Q17 4 17 9 Q21 10 21 15 Q21 19 17 19Z" fill="#e8e8e8" stroke="#333" strokeWidth="1.3" />
        <path d="M2 14 Q10 9 20 14" stroke="#777" />
      </Svg>
      <div className="ml-[18px] w-[36px] text-center text-[13.5px] leading-[20px] text-[#222]">ENG<br />IN</div>
      <Svg w={22} h={20} className="ml-[19px]">
        <path d="M1 7 Q11 -2 21 7 M4 11 Q11 4 18 11 M7 14 Q11 10 15 14" stroke="#222" strokeWidth="1.4" />
        <circle cx="11" cy="18" r="1.6" fill="#222" />
      </Svg>
      <Svg w={20} h={20} className="ml-[4px]">
        <path d="M1 7 H4 L9 2 V18 L4 13 H1Z" stroke="#333" strokeWidth="1.2" />
        <path d="M12 7 L18 13 M18 7 L12 13" stroke="#333" strokeWidth="1.2" />
      </Svg>
      <Svg w={22} h={14} className="ml-[14px]">
        <rect x="1" y="1" width="17" height="12" rx="3" stroke="#222" strokeWidth="1.4" />
        <rect x="4" y="3.5" width="6" height="7" fill="#222" />
        <path d="M20 5 V9" stroke="#222" strokeWidth="2" />
      </Svg>
      <div className="ml-[16px] w-[79px] text-right text-[14px] leading-[20px] tracking-[-0.2px] text-[#222] whitespace-nowrap">15:19<br />22-07-2024</div>
      <Svg w={18} h={22} className="ml-[10px]">
        <path d="M9 1 Q14 1 14 8 V14 L17 17 H1 L4 14 V8 Q4 1 9 1Z M7 19 Q9 22 11 19Z" fill="#1d4a56" />
      </Svg>
      <div className="ml-[24px] relative">
        <Svg w={34} h={34}>
          <path d="M9 1 H20 L14 26 Q13 30 8 30 H4 Q0 30 1 26 L6 6 Q7 1 9 1Z" fill="#3ec1ea" />
          <path d="M14 1 H22 Q27 1 28 6 L32 20 Q33 24 29 24 H23 L18 5 Q17 2 14 1Z" fill="#c060d8" />
          <path d="M14 16 L22 12 L26 24 Q18 30 10 30Z" fill="#f5c03c" />
        </Svg>
        <div className="absolute left-[7px] top-[21px] w-[24px] h-[15px] rounded-[3px] bg-[#f7c600] text-[11px] font-bold leading-[15px] text-center text-[#222]">PRE</div>
      </div>
    </div>
  );
}

export default function App() {
  return (
    <div className="w-[1920px] h-[1080px] overflow-hidden flex flex-col bg-white">
      <TitleBar />
      <Ribbon />
      <div className="h-[790px] flex shrink-0">
        <Rail />
        <div className="w-[1559px] shrink-0 flex flex-col">
          <Canvas />
          <Tabs />
        </div>
        <RightPanes />
      </div>
      <StatusBar />
      <Taskbar />
    </div>
  );
}
